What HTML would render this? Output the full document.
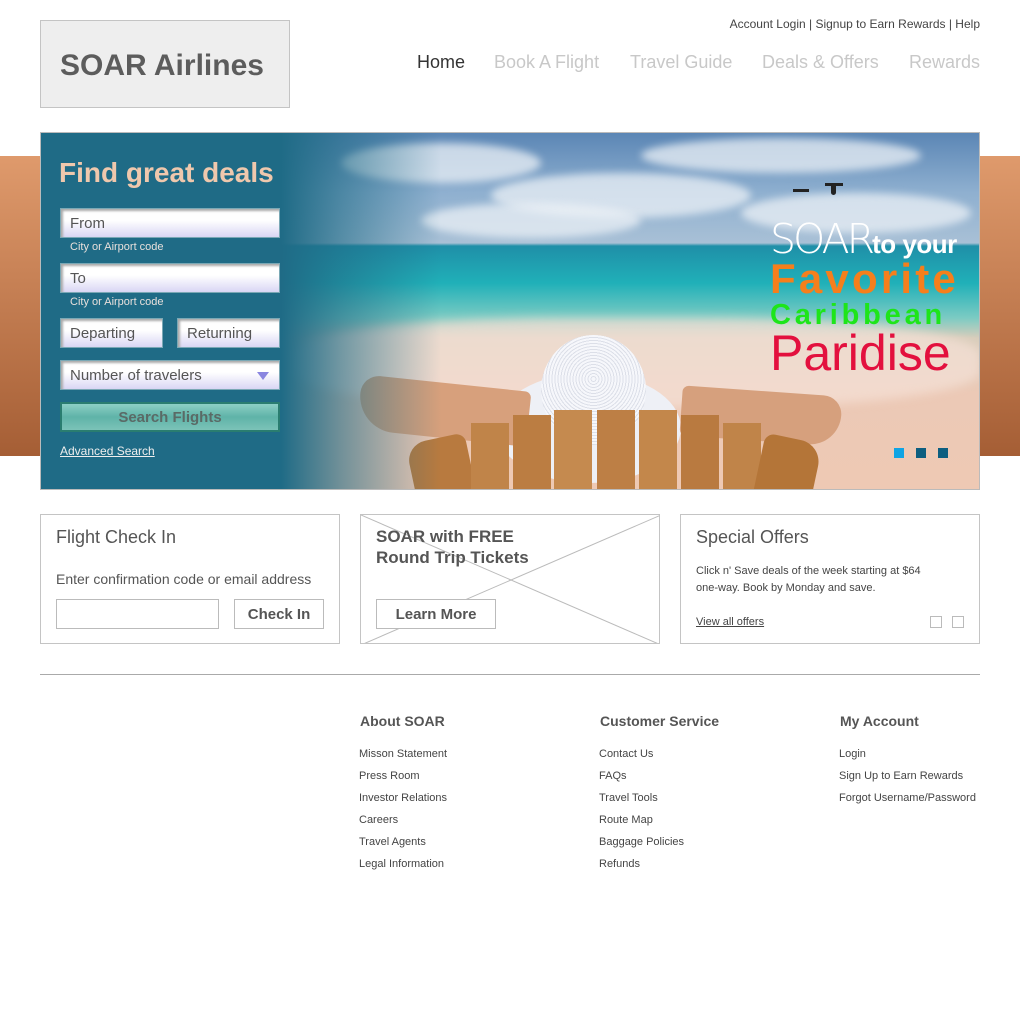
<!DOCTYPE html>
<html><head><meta charset="utf-8"><style>
*{margin:0;padding:0;box-sizing:border-box}
body{width:1020px;height:1020px;background:#fff;font-family:"Liberation Sans",Arial,sans-serif;position:relative;overflow:hidden;color:#555}
.a{position:absolute}
.logo{left:40px;top:20px;width:250px;height:88px;background:#eee;border:1px solid #c4c4c4;font-size:30px;font-weight:bold;color:#5c5c5c;padding:28px 0 0 19px}
.top{right:40px;top:17px;font-size:12px;color:#444}
.nav{top:52px;font-size:18px;color:#c8c8c8}
.band{top:156px;height:300px;width:40px;background:linear-gradient(#df9a6c,#a55e35)}
.hero{left:40px;top:132px;width:940px;height:358px;overflow:hidden;border:1px solid #bbb;
background:linear-gradient(#5b86b5 0,#8fb0d0 60px,#a8c0d6 110px,#1f8fa8 113px,#20b0b8 150px,#7ccbc3 185px,#d8cdbb 205px,#ecc9b6 260px,#eec9b4 358px)}
.cloud{position:absolute;border-radius:50%;background:rgba(235,240,245,.75);filter:blur(4px)}
.panel{left:0;top:0;width:420px;height:358px;background:linear-gradient(90deg,#1f6b86 0,#1f6b86 240px,rgba(31,107,134,.6) 300px,rgba(31,107,134,0) 400px)}
.inp{position:absolute;height:30px;border:1px solid #7aa8b5;background:linear-gradient(#fff,#fff 40%,#d9d6f4);box-shadow:inset 2px 2px 2px #aaa;font-size:15px;color:#555;padding:6px 0 0 9px}
.sub{position:absolute;font-size:11px;color:#e8e0dc}
.card{top:514px;width:300px;height:130px;border:1px solid #c4c4c4}
.btn{position:absolute;border:1px solid #bbb;background:#fff;font-weight:bold;font-size:15px;color:#555;text-align:center}
.fh{font-size:14px;font-weight:bold;color:#555;top:713px}
.fl{font-size:11px;color:#444;line-height:22px;top:743px}
</style></head><body>
<div class="a logo">SOAR Airlines</div>
<div class="a top">Account Login | Signup to Earn Rewards | Help</div>
<div class="a nav" style="left:417px;color:#333">Home</div>
<div class="a nav" style="left:494px">Book A Flight</div>
<div class="a nav" style="left:630px">Travel Guide</div>
<div class="a nav" style="left:762px">Deals &amp; Offers</div>
<div class="a nav" style="left:909px">Rewards</div>

<div class="a band" style="left:0"></div>
<div class="a band" style="left:980px"></div>

<div class="a hero">
 <div class="cloud" style="left:300px;top:10px;width:200px;height:40px"></div>
 <div class="cloud" style="left:450px;top:40px;width:260px;height:45px"></div>
 <div class="cloud" style="left:600px;top:5px;width:280px;height:35px"></div>
 <div class="cloud" style="left:380px;top:70px;width:220px;height:35px"></div>
 <div class="cloud" style="left:700px;top:60px;width:230px;height:40px"></div>
 <div class="a" style="left:250px;top:185px;width:690px;height:90px;background:rgba(245,225,215,.7);filter:blur(5px);border-radius:40%"></div>
 <div class="a" style="left:752px;top:56px;width:16px;height:3px;background:#222"></div>
 <div class="a" style="left:784px;top:50px;width:18px;height:3px;background:#222"></div>
 <div class="a" style="left:790px;top:50px;width:5px;height:12px;background:#222;border-radius:3px"></div>
 <div class="a" style="left:455px;top:240px;width:185px;height:110px;border-radius:50%;background:#eef0f6"></div>
 <div class="a" style="left:500px;top:202px;width:105px;height:110px;border-radius:50%;background:repeating-radial-gradient(circle at 50% 40%,#f6f7fb 0 2px,#dcdfe8 2px 3px)"></div>
 <div class="a" style="left:318px;top:250px;width:170px;height:55px;border-radius:30px 10px 10px 60px;background:#d7a07c;transform:rotate(6deg)"></div>
 <div class="a" style="left:640px;top:258px;width:160px;height:50px;border-radius:10px 30px 50px 10px;background:#d6a07d;transform:rotate(4deg)"></div>
 <div class="a" style="left:370px;top:305px;width:60px;height:60px;background:#b87a3f;border-radius:20px 10px 0 0;transform:rotate(-12deg)"></div>
 <div class="a" style="left:430px;top:290px;width:38px;height:70px;background:#c08449"></div>
 <div class="a" style="left:472px;top:282px;width:38px;height:80px;background:#bb7d42"></div>
 <div class="a" style="left:513px;top:277px;width:38px;height:85px;background:#c58a4f"></div>
 <div class="a" style="left:556px;top:277px;width:38px;height:85px;background:#bd7f45"></div>
 <div class="a" style="left:598px;top:277px;width:38px;height:85px;background:#c3874b"></div>
 <div class="a" style="left:640px;top:282px;width:38px;height:80px;background:#b97a40"></div>
 <div class="a" style="left:682px;top:290px;width:38px;height:70px;background:#c08449"></div>
 <div class="a" style="left:718px;top:305px;width:58px;height:60px;background:#b47538;border-radius:10px 22px 0 0;transform:rotate(12deg)"></div>

 <div class="a panel"></div>
 <div class="a" style="left:18px;top:24px;font-size:28px;font-weight:bold;color:#efc8ad">Find great deals</div>
 <div class="inp" style="left:19px;top:75px;width:220px">From</div>
 <div class="sub" style="left:29px;top:108px">City or Airport code</div>
 <div class="inp" style="left:19px;top:130px;width:220px">To</div>
 <div class="sub" style="left:29px;top:163px">City or Airport code</div>
 <div class="inp" style="left:19px;top:185px;width:103px">Departing</div>
 <div class="inp" style="left:136px;top:185px;width:103px">Returning</div>
 <div class="inp" style="left:19px;top:227px;width:220px">Number of travelers<span style="position:absolute;right:10px;top:11px;border-left:6px solid transparent;border-right:6px solid transparent;border-top:8px solid #8a86e0"></span></div>
 <div class="a" style="left:19px;top:269px;width:220px;height:30px;border:2px solid #2a7d70;background:linear-gradient(#8ccfc5,#5fb3a8 50%,#7cc3b8);font-size:15px;font-weight:bold;color:#5a6a66;text-align:center;padding-top:5px">Search Flights</div>
 <div class="a" style="left:19px;top:311px;font-size:12px;color:#eee;text-decoration:underline">Advanced Search</div>

 <div class="a" style="left:729px;top:84px;color:#fff;line-height:44px;white-space:nowrap"><span style="font-size:41px;font-weight:100;letter-spacing:-3px;font-family:'DejaVu Sans','Liberation Sans',sans-serif">SOAR</span><span style="font-size:26px;font-weight:bold;letter-spacing:-0.5px">to your</span></div>
 <div class="a" style="left:729px;top:124px;font-size:42px;font-weight:bold;color:#f57f1c;letter-spacing:3.2px;line-height:44px">Favorite</div>
 <div class="a" style="left:729px;top:166px;font-size:29px;font-weight:bold;color:#1ee51a;letter-spacing:3.8px;line-height:32px">Caribbean</div>
 <div class="a" style="left:729px;top:192px;font-size:50px;color:#e3103e;line-height:56px">Paridise</div>

 <div class="a" style="left:853px;top:315px;width:10px;height:10px;background:#0fa4e4"></div>
 <div class="a" style="left:875px;top:315px;width:10px;height:10px;background:#0d5e80"></div>
 <div class="a" style="left:897px;top:315px;width:10px;height:10px;background:#0d5e80"></div>
</div>

<div class="a card" style="left:40px">
 <div class="a" style="left:15px;top:12px;font-size:18px;color:#555">Flight Check In</div>
 <div class="a" style="left:15px;top:56px;font-size:14px;color:#555">Enter confirmation code or email address</div>
 <div class="a" style="left:15px;top:84px;width:163px;height:30px;border:1px solid #bbb"></div>
 <div class="btn" style="left:193px;top:84px;width:90px;height:30px;padding-top:6px">Check In</div>
</div>
<div class="a card" style="left:360px;overflow:hidden">
 <svg class="a" style="left:0;top:0" width="300" height="130"><line x1="0" y1="0" x2="300" y2="130" stroke="#bbb"/><line x1="300" y1="0" x2="0" y2="130" stroke="#bbb"/></svg>
 <div class="a" style="left:15px;top:11px;font-size:17px;font-weight:bold;color:#555;line-height:21px">SOAR with FREE<br>Round Trip Tickets</div>
 <div class="btn" style="left:15px;top:84px;width:120px;height:30px;padding-top:6px">Learn More</div>
</div>
<div class="a card" style="left:680px">
 <div class="a" style="left:15px;top:12px;font-size:18px;color:#555">Special Offers</div>
 <div class="a" style="left:15px;top:48px;font-size:11px;color:#444;line-height:17px">Click n' Save deals of the week starting at $64<br>one-way. Book by Monday and save.</div>
 <div class="a" style="left:15px;top:101px;font-size:11px;color:#444;text-decoration:underline">View all offers</div>
 <div class="a" style="left:249px;top:101px;width:12px;height:12px;border:1px solid #bbb"></div>
 <div class="a" style="left:271px;top:101px;width:12px;height:12px;border:1px solid #bbb"></div>
</div>

<div class="a" style="left:40px;top:674px;width:940px;height:1px;background:#aaa"></div>

<div class="a fh" style="left:360px">About SOAR</div>
<div class="a fh" style="left:600px">Customer Service</div>
<div class="a fh" style="left:840px">My Account</div>
<div class="a fl" style="left:359px">Misson Statement<br>Press Room<br>Investor Relations<br>Careers<br>Travel Agents<br>Legal Information</div>
<div class="a fl" style="left:599px">Contact Us<br>FAQs<br>Travel Tools<br>Route Map<br>Baggage Policies<br>Refunds</div>
<div class="a fl" style="left:839px">Login<br>Sign Up to Earn Rewards<br>Forgot Username/Password</div>
</body></html>
